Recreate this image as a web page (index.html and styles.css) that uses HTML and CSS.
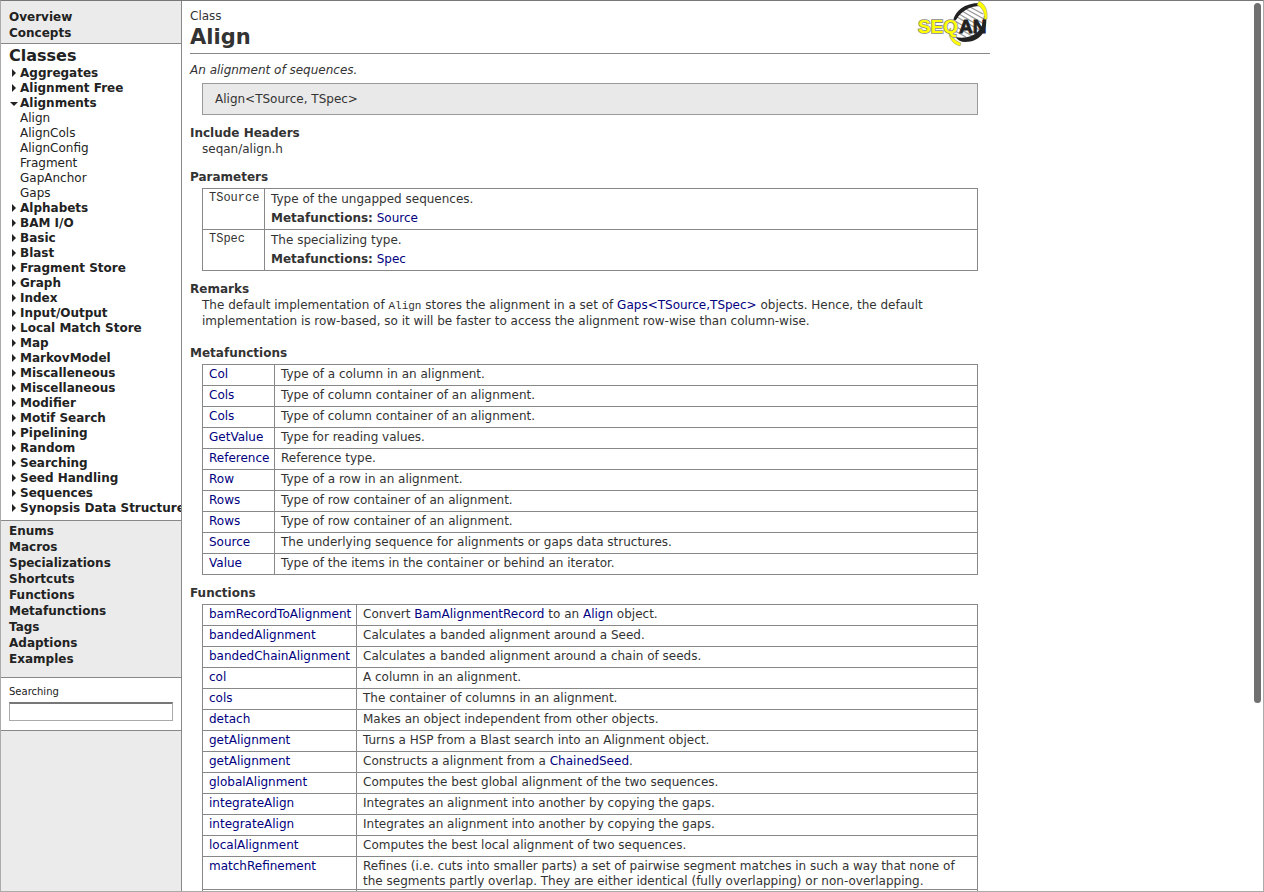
FILE: index.html
```html
<!DOCTYPE html>
<html lang="en">
<head>
<meta charset="utf-8">
<title>Align - SeqAn</title>
<link rel="stylesheet" href="styles.css">
</head>
<body>
<div class="frame">
<aside class="sidebar">
  <nav class="top-links"><a href="#">Overview</a><a href="#">Concepts</a></nav>
  <nav class="classes">
    <h2><a href="#">Classes</a></h2>
    <ul class="tree">
      <li><a class="node" href="#">Aggregates</a></li>
      <li><a class="node" href="#">Alignment Free</a></li>
      <li><a class="node open" href="#">Alignments</a>
        <ul>
          <li><a href="#">Align</a></li>
          <li><a href="#">AlignCols</a></li>
          <li><a href="#">AlignConfig</a></li>
          <li><a href="#">Fragment</a></li>
          <li><a href="#">GapAnchor</a></li>
          <li><a href="#">Gaps</a></li>
        </ul>
      </li>
      <li><a class="node" href="#">Alphabets</a></li>
      <li><a class="node" href="#">BAM I/O</a></li>
      <li><a class="node" href="#">Basic</a></li>
      <li><a class="node" href="#">Blast</a></li>
      <li><a class="node" href="#">Fragment Store</a></li>
      <li><a class="node" href="#">Graph</a></li>
      <li><a class="node" href="#">Index</a></li>
      <li><a class="node" href="#">Input/Output</a></li>
      <li><a class="node" href="#">Local Match Store</a></li>
      <li><a class="node" href="#">Map</a></li>
      <li><a class="node" href="#">MarkovModel</a></li>
      <li><a class="node" href="#">Miscalleneous</a></li>
      <li><a class="node" href="#">Miscellaneous</a></li>
      <li><a class="node" href="#">Modifier</a></li>
      <li><a class="node" href="#">Motif Search</a></li>
      <li><a class="node" href="#">Pipelining</a></li>
      <li><a class="node" href="#">Random</a></li>
      <li><a class="node" href="#">Searching</a></li>
      <li><a class="node" href="#">Seed Handling</a></li>
      <li><a class="node" href="#">Sequences</a></li>
      <li><a class="node" href="#">Synopsis Data Structures</a></li>
    </ul>
  </nav>
  <nav class="bottom-links"><a href="#">Enums</a><a href="#">Macros</a><a href="#">Specializations</a><a href="#">Shortcuts</a><a href="#">Functions</a><a href="#">Metafunctions</a><a href="#">Tags</a><a href="#">Adaptions</a><a href="#">Examples</a></nav>
  <form class="search">
    <label for="search">Searching</label>
    <input id="search" type="text">
  </form>
</aside>
<main class="content">
  <article class="page">
    <header class="page-head">
      <div>
        <div class="kind">Class</div>
        <h1>Align</h1>
      </div>
      <svg class="logo" viewBox="0 0 72 46" role="img" aria-label="SeqAn">
        <path d="M36 28C34 18 38 10 48 6L62 4C68 12 67 30 57 36C50 40 42 39 37 36Z" fill="#fff"/>
        <g stroke="#999" stroke-width="1.4"><path d="M52 6l13 7M48 8l18 10M44 10l22 13M41 13l24 14M39 16l24 14M37 20l22 13M37 25l17 10M37 30l11 6"/></g>
        <path d="M35 20C37 10 46 2 62 2L62 5C53 5 44 9 38 19Z" fill="#222"/>
        <path d="M66 15l2 0C70 30 62 41 47 41C43 41 40 39 37 36C53 39 65 32 66 15Z" fill="#222"/>
        <path d="M61 0c6 3 9 9 8 18l-3 1C67 12 65 7 59 4Z" fill="#ff0" stroke="#888" stroke-width=".5"/>
        <path d="M33 27c-1 7 2 12 10 15l-1 3c-8-2-12-9-11-17Z" fill="#ff0" stroke="#888" stroke-width=".5"/>
        <g class="logo-text"><text x="0" y="32" fill="#ff0" stroke="#888" stroke-width="1.6">SEQ</text><text x="41" y="32" fill="#222" stroke="#222" stroke-width=".8">AN</text></g>
      </svg>
    </header>
    <p class="summary">An alignment of sequences.</p>
    <div class="signature">Align&lt;TSource, TSpec&gt;</div>
    <section>
      <h3>Include Headers</h3>
      <p class="text">seqan/align.h</p>
    </section>
    <section>
      <h3>Parameters</h3>
      <table class="params">
        <tr><th scope="row"><code>TSource</code></th><td><p>Type of the ungapped sequences.</p><p><b>Metafunctions:</b> <a href="#">Source</a></p></td></tr>
        <tr><th scope="row"><code>TSpec</code></th><td><p>The specializing type.</p><p><b>Metafunctions:</b> <a href="#">Spec</a></p></td></tr>
      </table>
    </section>
    <section>
      <h3>Remarks</h3>
      <p class="text remarks">The default implementation of <code>Align</code> stores the alignment in a set of <a href="#">Gaps&lt;TSource,TSpec&gt;</a> objects. Hence, the default implementation is row-based, so it will be faster to access the alignment row-wise than column-wise.</p>
    </section>
    <section>
      <h3>Metafunctions</h3>
      <table class="members meta">
        <tr><th scope="row"><a href="#">Col</a></th><td>Type of a column in an alignment.</td></tr>
        <tr><th scope="row"><a href="#">Cols</a></th><td>Type of column container of an alignment.</td></tr>
        <tr><th scope="row"><a href="#">Cols</a></th><td>Type of column container of an alignment.</td></tr>
        <tr><th scope="row"><a href="#">GetValue</a></th><td>Type for reading values.</td></tr>
        <tr><th scope="row"><a href="#">Reference</a></th><td>Reference type.</td></tr>
        <tr><th scope="row"><a href="#">Row</a></th><td>Type of a row in an alignment.</td></tr>
        <tr><th scope="row"><a href="#">Rows</a></th><td>Type of row container of an alignment.</td></tr>
        <tr><th scope="row"><a href="#">Rows</a></th><td>Type of row container of an alignment.</td></tr>
        <tr><th scope="row"><a href="#">Source</a></th><td>The underlying sequence for alignments or gaps data structures.</td></tr>
        <tr><th scope="row"><a href="#">Value</a></th><td>Type of the items in the container or behind an iterator.</td></tr>
      </table>
    </section>
    <section>
      <h3>Functions</h3>
      <table class="members functions">
        <tr><th scope="row"><a href="#">bamRecordToAlignment</a></th><td>Convert <a href="#">BamAlignmentRecord</a> to an <a href="#">Align</a> object.</td></tr>
        <tr><th scope="row"><a href="#">bandedAlignment</a></th><td>Calculates a banded alignment around a Seed.</td></tr>
        <tr><th scope="row"><a href="#">bandedChainAlignment</a></th><td>Calculates a banded alignment around a chain of seeds.</td></tr>
        <tr><th scope="row"><a href="#">col</a></th><td>A column in an alignment.</td></tr>
        <tr><th scope="row"><a href="#">cols</a></th><td>The container of columns in an alignment.</td></tr>
        <tr><th scope="row"><a href="#">detach</a></th><td>Makes an object independent from other objects.</td></tr>
        <tr><th scope="row"><a href="#">getAlignment</a></th><td>Turns a HSP from a Blast search into an Alignment object.</td></tr>
        <tr><th scope="row"><a href="#">getAlignment</a></th><td>Constructs a alignment from a <a href="#">ChainedSeed</a>.</td></tr>
        <tr><th scope="row"><a href="#">globalAlignment</a></th><td>Computes the best global alignment of the two sequences.</td></tr>
        <tr><th scope="row"><a href="#">integrateAlign</a></th><td>Integrates an alignment into another by copying the gaps.</td></tr>
        <tr><th scope="row"><a href="#">integrateAlign</a></th><td>Integrates an alignment into another by copying the gaps.</td></tr>
        <tr><th scope="row"><a href="#">localAlignment</a></th><td>Computes the best local alignment of two sequences.</td></tr>
        <tr><th scope="row"><a href="#">matchRefinement</a></th><td>Refines (i.e. cuts into smaller parts) a set of pairwise segment matches in such a way that none of the segments partly overlap. They are either identical (fully overlapping) or non-overlapping.</td></tr>
        <tr><th scope="row"></th><td></td></tr>
      </table>
    </section>
  </article>
</main>
<div class="scroll-thumb"></div>
</div>
</body>
</html>
```
FILE: styles.css
```css
* { box-sizing: border-box; }
body {
  margin: 0;
  font-family: Verdana, "DejaVu Sans", sans-serif;
  font-size: 12px;
  line-height: 15px;
  color: #333;
  background: #fff;
}
h1, h2, h3, p, ul { margin: 0; padding: 0; }
ul { list-style: none; }
a { color: #000080; text-decoration: none; }

.frame {
  position: relative;
  display: flex;
  height: 100vh;
  overflow: hidden;
  border: 1px solid #aaa;
  border-top-color: #777;
}

/* Sidebar */
.sidebar {
  flex: none;
  width: 181px;
  overflow: hidden;
  background: #ebebeb;
  border-right: 1px solid #888;
}
.sidebar a { color: #222; white-space: nowrap; }
.top-links, .bottom-links {
  display: flex;
  flex-direction: column;
  font-weight: bold;
  line-height: 16px;
}
.top-links { padding: 8px 8px 2px; }
.bottom-links { padding: 2px 8px 10px; }
.classes {
  padding: 2px 0 4px 8px;
  background: #fff;
  border: solid #888;
  border-width: 1px 0;
}
.classes h2 { font-size: 16px; line-height: 20px; }
.tree li { padding-left: 11px; }
.tree ul li { padding-left: 0; }
.tree a { display: block; }
.node { position: relative; font-weight: bold; }
.node::before {
  content: "";
  position: absolute;
  left: -8px;
  top: 3px;
  border: solid transparent;
  border-width: 4px 0 4px 4px;
  border-left-color: #222;
}
.node.open::before {
  left: -10px;
  top: 6px;
  border-width: 4px 4px 0;
  border-color: #222 transparent transparent;
}
.search {
  display: flex;
  flex-direction: column;
  gap: 3px;
  padding: 6px 8px 9px;
  background: #fff;
  border: solid #888;
  border-width: 1px 0;
  font-size: 10px;
  color: #222;
}
.search input {
  width: 100%;
  height: 19px;
  padding: 0 2px;
  background: #fff;
  border: 1px solid #aaa;
  border-top: 2px solid #777;
  border-radius: 0;
  font: inherit;
}

/* Documentation page */
.content { flex: 1; min-width: 0; padding: 8px; overflow: hidden; }
.page { max-width: 800px; }
.page-head {
  display: flex;
  justify-content: space-between;
  align-items: flex-start;
  height: 45px;
  border-bottom: 1px solid #888;
}
h1 { font-size: 21px; line-height: 26px; }
.logo { width: 72px; height: 46px; margin-top: -8px; overflow: visible; }
.logo-text { font: bold 19px "Liberation Sans", Arial, sans-serif; paint-order: stroke; }
.summary { margin-top: 8px; font-style: italic; line-height: 16px; }
.signature {
  margin: 5px 12px 10px;
  padding: 8px 12px 7px;
  line-height: 15px;
  background: #e9e9e9;
  border: 1px solid #999;
}
h3 { font-size: 12px; line-height: 16px; }
.text { padding: 0 12px; line-height: 16px; }
section { margin-bottom: 10px; }
.text { margin-bottom: 12px; }
.remarks { margin-bottom: 16px; }
code {
  font-family: "Liberation Mono", "Courier New", monospace;
  font-size: 11px;
  line-height: 1;
}
table {
  width: calc(100% - 24px);
  margin: 3px 12px 10px;
  border-collapse: collapse;
}
th, td {
  border: 1px solid #888;
  text-align: left;
  vertical-align: top;
  font-weight: normal;
}
.params th, .params td { padding: 1px 4px 1px 6px; }
.params th { width: 62px; }
.params code { font-size: 12px; }
.params td p { line-height: 19px; }
.members th, .members td { height: 21px; padding: 2px 0 0 6px; }
.meta th { width: 72px; }
.functions th { width: 154px; }

.scroll-thumb {
  position: absolute;
  top: 2px;
  right: 2px;
  width: 7px;
  height: 700px;
  border-radius: 4px;
  background: #707070;
}
```
